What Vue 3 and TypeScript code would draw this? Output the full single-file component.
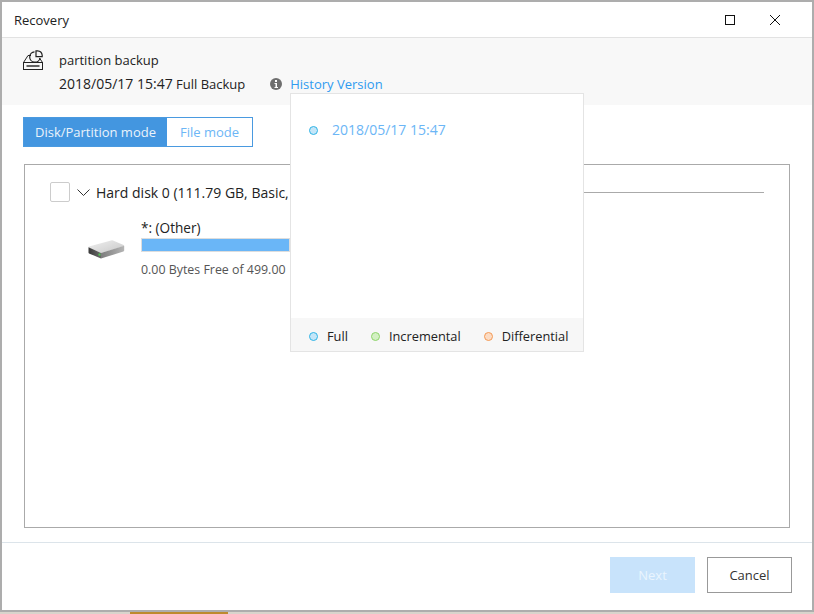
<script setup lang="ts">
const legend = [
  { label: 'Full', cls: 'blue' },
  { label: 'Incremental', cls: 'green' },
  { label: 'Differential', cls: 'orange' },
]
</script>

<template>
  <div class="page">
    <div class="window">
      <header class="titlebar">
        <span class="title">Recovery</span>
        <div class="controls">
          <svg width="10" height="10" viewBox="0 0 10 10"><rect x="0.5" y="0.5" width="9" height="9" fill="none" stroke="#111" /></svg>
          <svg width="10" height="10" viewBox="0 0 10 10"><path d="M0 0L10 10M10 0L0 10" stroke="#111" stroke-width="1" fill="none" /></svg>
        </div>
      </header>

      <section class="info">
        <svg class="backup-icon" width="20" height="20" viewBox="0 0 20 20">
          <path d="M0.5 12.5L5 5.5H8M16.5 8L19.5 12.5" fill="none" stroke="#222" stroke-width="1" />
          <rect x="0.5" y="12.5" width="19" height="7" fill="#f8f8f8" stroke="#222" stroke-width="1" />
          <path d="M3.5 16H16.5" stroke="#222" stroke-width="1.4" />
          <path d="M11.5 1.8A5.2 5.2 0 1 0 17 8" fill="none" stroke="#222" stroke-width="1.2" />
          <path d="M13 6.6V0.8H14.5A5 5 0 0 1 19.2 5.2V6.6Z" fill="#f8f8f8" stroke="#222" stroke-width="1.2" />
        </svg>
        <div class="info-text">
          <div class="name">partition backup</div>
          <div class="meta">
            <span><span class="digits">2018/05/17 15:47</span> Full Backup</span>
            <svg class="info-icon" width="12" height="12" viewBox="0 0 12 12">
              <circle cx="6" cy="6" r="6" fill="#6e6e6e" />
              <rect x="5" y="2" width="2" height="2" fill="#fff" />
              <path d="M4.5 5H7V9H8V10H4.5V9H5.5V6H4.5Z" fill="#fff" />
            </svg>
            <a class="history">History Version</a>
          </div>
        </div>
      </section>

      <main class="content">
        <div class="tabs">
          <div class="tab active">Disk/Partition mode</div>
          <div class="tab">File mode</div>
        </div>
        <div class="panel">
          <div class="disk-row">
            <span class="check"></span>
            <svg class="chev" width="13" height="7" viewBox="0 0 13 7"><path d="M0.5 0.5L6.5 6.5L12.5 0.5" fill="none" stroke="#333" stroke-width="1" /></svg>
            <span class="disk-name">Hard disk 0 (111.79 GB, Basic,</span>
            <span class="disk-line"></span>
          </div>
          <div class="part-row">
            <svg class="hdd" width="37" height="19" viewBox="0 0 37 19">
              <defs>
                <linearGradient id="hddtop" x1="0" y1="0" x2="1" y2="1">
                  <stop offset="0" stop-color="#f0f0f0" />
                  <stop offset="1" stop-color="#c8c8c8" />
                </linearGradient>
                <linearGradient id="hddleft" x1="0" y1="0" x2="1" y2="0">
                  <stop offset="0" stop-color="#3a3a3a" />
                  <stop offset="1" stop-color="#6a6a6a" />
                </linearGradient>
                <linearGradient id="hddright" x1="0" y1="0" x2="1" y2="0">
                  <stop offset="0" stop-color="#7d7d7d" />
                  <stop offset="1" stop-color="#b5b5b5" />
                </linearGradient>
              </defs>
              <path d="M0.5 7.5Q0 7 1 6.6L23 0.4Q24 0 25 0.4L35.6 5Q36.5 5.6 35.6 6.2L14 12.8Q13 13.2 12 12.8Z" fill="url(#hddtop)" />
              <path d="M0.5 7.3L13 13V18.6L1 13.4Q0.5 13 0.5 12.4Z" fill="url(#hddleft)" />
              <path d="M13 13L36.2 5.8V10.6Q36.2 11.2 35.4 11.5L13 18.6Z" fill="url(#hddright)" />
              <rect x="10.5" y="13.6" width="2" height="2" fill="#4fd04f" />
            </svg>
            <div class="part">
              <div class="part-name">*: (Other)</div>
              <div class="bar"></div>
              <div class="part-size">0.00 Bytes Free of 499.00</div>
            </div>
          </div>
        </div>
      </main>

      <footer class="footer">
        <button class="btn next">Next</button>
        <button class="btn cancel">Cancel</button>
      </footer>

      <div class="popover">
        <div class="pop-body">
          <span class="dot blue"></span>
          <span class="pop-date">2018/05/17 15:47</span>
        </div>
        <div class="pop-legend">
          <div v-for="item in legend" :key="item.label" class="legend-item">
            <span class="dot" :class="item.cls"></span>
            <span>{{ item.label }}</span>
          </div>
        </div>
      </div>
    </div>
    <div class="strip"><span class="strip-fill"></span></div>
  </div>
</template>

<style>
html, body { margin: 0; background: #fff; }
</style>

<style scoped>
.page {
  width: 814px;
  height: 614px;
  display: flex;
  flex-direction: column;
  overflow: hidden;
  font-family: "Open Sans", "Noto Sans", sans-serif;
  font-size: 13px;
  color: #222;
}
.window {
  position: relative;
  flex: 1;
  min-height: 0;
  display: flex;
  flex-direction: column;
  background: #fff;
  border: 2px solid #adadad;
  box-sizing: border-box;
}
.strip {
  height: 2px;
  background: #d8d4cc;
  padding-left: 130px;
  display: flex;
}
.strip-fill { width: 98px; background: #bd8a2e; }
.titlebar {
  height: 36px;
  flex: none;
  box-sizing: border-box;
  border-bottom: 1px solid #e2e2e2;
  padding: 0 32px 0 12px;
  display: flex;
  align-items: center;
  justify-content: space-between;
}
.controls { display: flex; align-items: center; gap: 35px; }
.controls svg { display: block; }
.info {
  height: 67px;
  flex: none;
  box-sizing: border-box;
  background: #f8f8f8;
  padding: 12px 0 0 21px;
  display: flex;
}
.backup-icon { flex: none; }
.info-text { margin-left: 16px; }
.name { line-height: 20px; }
.meta { display: flex; align-items: center; margin-top: 4px; line-height: 20px; }
.digits { font-size: 14px; }
.info-icon { margin: 0 8px 0 25px; }
.history { color: #2f9bf0; }
.content {
  flex: 1;
  min-height: 0;
  padding: 12px 22px 14px 21px;
  display: flex;
  flex-direction: column;
}
.tabs { display: flex; flex: none; width: 230px; height: 30px; box-sizing: border-box; border: 1px solid #4a9ae0; }
.tab {
  flex: none;
  width: 85px;
  box-sizing: border-box;
  color: #6cb6f6;
  display: flex;
  align-items: center;
  justify-content: center;
}
.tab.active { width: 143px; background: #4396e0; color: #eaf3fb; }
.panel {
  flex: 1;
  margin: 17px 0 0 1px;
  border: 1px solid #aaa;
  padding: 15px 25px 0 25px;
}
.disk-row { display: flex; align-items: center; height: 24px; }
.check {
  width: 20px;
  height: 20px;
  box-sizing: border-box;
  border: 1px solid #ccc;
  border-radius: 2px;
  flex: none;
}
.chev { margin: 0 6px 0 7px; flex: none; }
.disk-name { flex: none; font-size: 14px; white-space: nowrap; width: 196px; overflow: hidden; }
.disk-line { flex: 1; height: 1px; background: #aaa; }
.part-row { display: flex; margin-top: 14px; padding-left: 38px; }
.hdd { margin: 22px 16px 0 0; flex: none; }
.part { width: 149px; }
.part-name { line-height: 20px; font-size: 13.6px; }
.bar { height: 14px; background: #6ab6f7; border: 1px solid #ddd; box-sizing: border-box; }
.part-size { margin-top: 9px; font-size: 12.4px; color: #555; white-space: nowrap; line-height: 18px; }
.footer {
  height: 68px;
  flex: none;
  box-sizing: border-box;
  border-top: 1px solid #dce4ea;
  padding: 14px 20px 0 0;
  display: flex;
  justify-content: flex-end;
  gap: 12px;
}
.btn {
  width: 85px;
  height: 36px;
  font: inherit;
  padding: 0;
}
.next { background: #c8e3fb; color: #eaf5fe; border: none; }
.cancel { background: #fff; color: #333; border: 1px solid #999; }
.popover {
  position: absolute;
  left: 288px;
  top: 91px;
  width: 294px;
  height: 259px;
  box-sizing: border-box;
  background: #fff;
  border: 1px solid #e4e4e4;
  display: flex;
  flex-direction: column;
}
.pop-body {
  flex: 1;
  padding: 26px 0 0 18px;
  display: flex;
  align-items: flex-start;
  gap: 14px;
}
.pop-body .dot { margin-top: 6px; }
.pop-date { color: #6cb6f6; line-height: 20px; font-size: 14px; }
.pop-legend {
  height: 33px;
  flex: none;
  box-sizing: border-box;
  padding: 3px 0 0 18px;
  background: #f7f7f7;
  display: flex;
  align-items: center;
  gap: 23px;
  font-size: 12.8px;
}
.legend-item { display: flex; align-items: center; gap: 9px; }
.dot {
  width: 7px;
  height: 7px;
  border-radius: 50%;
  box-sizing: content-box;
  border: 1px solid;
  flex: none;
}
.dot.blue { background: #c5e6f8; border-color: #2fb4e6; }
.dot.green { background: #d3f0c3; border-color: #8ed46b; }
.dot.orange { background: #fcdcc4; border-color: #f49a55; }
</style>
